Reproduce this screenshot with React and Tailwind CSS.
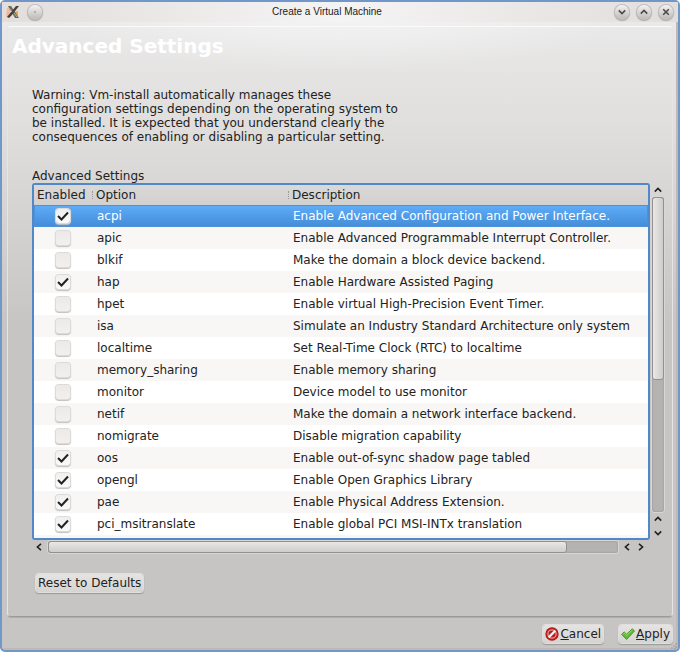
import React, { useState } from 'react';

const OPTIONS = [
  { name: 'acpi', enabled: true, description: 'Enable Advanced Configuration and Power Interface.' },
  { name: 'apic', enabled: false, description: 'Enable Advanced Programmable Interrupt Controller.' },
  { name: 'blkif', enabled: false, description: 'Make the domain a block device backend.' },
  { name: 'hap', enabled: true, description: 'Enable Hardware Assisted Paging' },
  { name: 'hpet', enabled: false, description: 'Enable virtual High-Precision Event Timer.' },
  { name: 'isa', enabled: false, description: 'Simulate an Industry Standard Architecture only system' },
  { name: 'localtime', enabled: false, description: 'Set Real-Time Clock (RTC) to localtime' },
  { name: 'memory_sharing', enabled: false, description: 'Enable memory sharing' },
  { name: 'monitor', enabled: false, description: 'Device model to use monitor' },
  { name: 'netif', enabled: false, description: 'Make the domain a network interface backend.' },
  { name: 'nomigrate', enabled: false, description: 'Disable migration capability' },
  { name: 'oos', enabled: true, description: 'Enable out-of-sync shadow page tabled' },
  { name: 'opengl', enabled: true, description: 'Enable Open Graphics Library' },
  { name: 'pae', enabled: true, description: 'Enable Physical Address Extension.' },
  { name: 'pci_msitranslate', enabled: true, description: 'Enable global PCI MSI-INTx translation' }
];

const GLYPHS = {
  up: 'M1 7 L5 3 L9 7',
  down: 'M1 3 L5 7 L9 3',
  left: 'M7.5 1 L3 5 L7.5 9',
  right: 'M2.5 1 L7 5 L2.5 9',
  close: 'M1.5 1.5 L8.5 8.5 M8.5 1.5 L1.5 8.5'
};

const Glyph = ({ kind, className }) => (
  <svg viewBox="0 0 10 10" className={className} fill="none" stroke="currentColor" strokeWidth="2" aria-hidden="true">
    <path d={GLYPHS[kind]} />
  </svg>
);

const RoundButton = ({ label, kind }) => (
  <button
    type="button"
    aria-label={label}
    className="flex size-[14px] items-center justify-center rounded-full bg-linear-to-b from-[#f4f3f2] to-[#bebcbb] text-[#4a4a4a] shadow-[0_0_0_1px_#c2c0bf,0_1px_1px_1px_#aaa8a7]"
  >
    {kind ? <Glyph kind={kind} className="size-2" /> : <span className="size-[2px] rounded-full bg-[#a3a1a0]" />}
  </button>
);

const ArrowButton = ({ label, kind }) => (
  <button type="button" aria-label={label} className="flex size-[14px] shrink-0 items-center justify-center text-[#222]">
    <Glyph kind={kind} className="size-2" />
  </button>
);

const AppLogo = () => (
  <svg viewBox="0 0 16 16" className="size-4" aria-hidden="true">
    <path d="M2 4 L5 3 L5 9 L3 13 L1 13 Z" fill="#f3b79b" />
    <path d="M10 8 L13 7 L13 12 L10 11 Z" fill="#f2a42f" />
    <path d="M3 2 L6 2 L14 14 L10 14 Z" fill="#6e685c" />
    <path d="M11 2 L14 2 L7 11 L4 14 L2 13 Z" fill="#45413a" />
    <path d="M4 4 L7 8 M9 9 L12 13" stroke="#b5af9f" strokeWidth="1" />
  </svg>
);

const TitleBar = () => (
  <header className="flex h-5 items-center justify-between bg-[linear-gradient(90deg,#e1dedc,#f5f4f4_50%,#e1dedc)] pr-[5px] pl-[3px]">
    <div className="flex w-10 items-center gap-[7px]">
      <AppLogo />
      <RoundButton label="Window menu" />
    </div>
    <div className="font-['Liberation_Sans',sans-serif] text-[10px] leading-[14px] text-[#222]">Create a Virtual Machine</div>
    <div className="flex w-16 justify-end gap-2">
      <RoundButton label="Minimize" kind="down" />
      <RoundButton label="Maximize" kind="up" />
      <RoundButton label="Close" kind="close" />
    </div>
  </header>
);

const CheckBox = ({ label, checked, onChange }) => (
  <label className="relative mx-auto block size-[14px]">
    <input
      type="checkbox"
      aria-label={label}
      checked={checked}
      onChange={onChange}
      className="peer block size-[14px] appearance-none rounded-[3px] bg-linear-to-b from-[#ebeae9] to-[#f1f0ef] shadow-[0_0_0_1px_#dddbda,0_1px_1px_1px_#c2c0bf] checked:from-[#f0efef] checked:to-[#fafafa]"
    />
    <svg viewBox="0 0 14 14" className="pointer-events-none absolute inset-0 hidden peer-checked:block" fill="none" stroke="#222" strokeWidth="2" aria-hidden="true">
      <path d="M2 7 L5.5 10.5 L12 3.5" />
    </svg>
  </label>
);

const HeaderCell = ({ children, divided }) => (
  <th scope="col" className="h-5 p-0 text-left font-normal">
    <div className={`flex items-center ${divided ? '' : 'pl-[3px]'}`}>
      {divided && <span className="mr-[3px] h-[8px] border-l border-dotted border-[#999]" />}
      {children}
    </div>
  </th>
);

const OptionsTable = ({ options, selected, onSelect, onToggle }) => (
  <div className="h-[357px] min-w-0 flex-1 overflow-hidden rounded-[3px] border-2 border-[#5088c8] bg-white">
    <table className="w-full table-fixed border-collapse" aria-labelledby="options-title">
      <colgroup>
        <col className="w-[58px]" />
        <col className="w-[196px]" />
        <col />
      </colgroup>
      <thead className="bg-linear-to-b from-[#dad9d8] to-[#d2d1d0]">
        <tr className="h-5">
          <HeaderCell>Enabled</HeaderCell>
          <HeaderCell divided>Option</HeaderCell>
          <HeaderCell divided>Description</HeaderCell>
        </tr>
      </thead>
      <tbody>
        {options.map((option, idx) => (
          <tr
            key={option.name}
            onClick={() => onSelect(idx)}
            className={`h-[22px] whitespace-nowrap ${idx === selected
              ? 'bg-linear-to-b from-[#5fadf8] to-[#438cd8] text-white shadow-[inset_0_0_0_1px_#4c91d9]'
              : 'odd:bg-white even:bg-[#f8f7f6]'}`}
          >
            <td className="p-0">
              <CheckBox label={option.name} checked={option.enabled} onChange={() => onToggle(idx)} />
            </td>
            <td className="py-0 pl-[5px]">{option.name}</td>
            <td className="py-0 pl-[5px]">{option.description}</td>
          </tr>
        ))}
        <tr className="h-[22px] bg-[#f8f7f6]">
          <td colSpan={3} />
        </tr>
      </tbody>
    </table>
  </div>
);

const VerticalScroll = () => (
  <div className="flex w-[14px] flex-col items-center">
    <ArrowButton label="Scroll up" kind="up" />
    <div className="w-3 flex-1 rounded-[3px] bg-[#b5b3b2] shadow-[0_0_0_1px_#d9d7d6,inset_0_0_2px_#8a8887]">
      <div className="h-[58%] rounded-[3px] border border-[#929090] bg-linear-to-r from-[#e9e8e7] to-[#cfcdcc]" />
    </div>
    <ArrowButton label="Page up" kind="up" />
    <ArrowButton label="Scroll down" kind="down" />
  </div>
);

const HorizontalScroll = () => (
  <div className="mr-[17px] flex h-[14px] items-center">
    <ArrowButton label="Scroll left" kind="left" />
    <div className="mx-[2px] h-3 flex-1 rounded-[3px] bg-[#b5b3b2] shadow-[0_0_0_1px_#d9d7d6,inset_0_0_2px_#8a8887]">
      <div className="h-full w-[91%] rounded-[3px] border border-[#929090] bg-linear-to-b from-[#e9e8e7] to-[#cfcdcc]" />
    </div>
    <ArrowButton label="Page left" kind="left" />
    <ArrowButton label="Scroll right" kind="right" />
  </div>
);

const PushButton = ({ children, onClick }) => (
  <button
    type="button"
    onClick={onClick}
    className="flex h-[18px] items-center gap-px rounded-[3px] bg-linear-to-b from-[#e5e4e3] to-[#d6d4d3] px-[2px] leading-[14px] shadow-[0_0_0_1px_#e0dfde,0_1px_1px_1px_#9a9897]"
  >
    {children}
  </button>
);

const CancelIcon = () => (
  <svg viewBox="0 0 16 16" className="size-[14px]" aria-hidden="true">
    <circle cx="8" cy="8" r="7.6" fill="#b01515" />
    <circle cx="8" cy="8" r="6.4" fill="#cf2a26" />
    <circle cx="8" cy="8" r="4.6" fill="#b51a18" stroke="#dfb9b7" strokeWidth="1.1" />
    <path d="M4.2 11.8 L11.8 4.2" stroke="#f3ecec" strokeWidth="2.6" />
  </svg>
);

const ApplyIcon = () => (
  <svg viewBox="0 0 16 16" className="size-[14px]" aria-hidden="true">
    <path d="M0.8 8.6 L3.6 5.6 L6.4 8.2 L13 2 L15.4 4.6 L6.4 14.2 Z" fill="#62bb36" stroke="#3f8c20" strokeWidth="1" strokeLinejoin="round" />
    <path d="M2.5 8.2 L3.8 7 L6.5 9.6 L13 3.4" stroke="#9fe06e" strokeWidth="1" fill="none" />
  </svg>
);

const ResizeGrip = () => (
  <svg viewBox="0 0 8 8" className="absolute right-0 bottom-0 size-2 text-[#8f8988]" fill="currentColor" aria-hidden="true">
    <circle cx="6" cy="2" r="0.7" />
    <circle cx="4" cy="4" r="0.7" />
    <circle cx="6" cy="5" r="0.7" />
    <circle cx="2" cy="6" r="0.7" />
    <circle cx="5" cy="7" r="0.7" />
  </svg>
);

export default function App() {
  const [options, setOptions] = useState(OPTIONS);
  const [selected, setSelected] = useState(0);

  const toggleOption = (idx) => {
    setOptions(options.map((option, i) => (i === idx ? { ...option, enabled: !option.enabled } : option)));
  };

  return (
    <div className="relative flex min-h-screen flex-col rounded-[5px] border-2 border-[#7196c9] bg-[#c7c5c4] bg-[radial-gradient(300px_70px_at_50%_0,#f6f6f6,transparent),linear-gradient(180deg,#ecebeb,#dfdedd_20%,#c7c5c4_50%)] font-['DejaVu_Sans',sans-serif] text-[12px] leading-[14px] text-[#222] shadow-[inset_-2px_-2px_0_#c0b8b5]">
      <TitleBar />

      <main className="mx-[5px] mt-1 flex-1 rounded-[4px] border border-t-[#fafafa] border-r-[#e6e5e4] border-b-[#9c9a99] border-l-[#e6e5e4] pr-[7px] pl-6 shadow-[0_1px_0_#b0aead]">
        <h1 className="-ml-5 pt-2 text-[20px] leading-[22px] font-bold text-white">Advanced Settings</h1>

        <p className="mt-[31px] max-w-[370px]">
          Warning: Vm-install automatically manages these configuration settings depending on the operating system to
          be installed. It is expected that you understand clearly the consequences of enabling or disabling a
          particular setting.
        </p>

        <h2 id="options-title" className="mt-[25px]">Advanced Settings</h2>
        <div className="flex gap-px">
          <OptionsTable options={options} selected={selected} onSelect={setSelected} onToggle={toggleOption} />
          <VerticalScroll />
        </div>
        <HorizontalScroll />

        <div className="mt-5 flex pl-1">
          <PushButton onClick={() => setOptions(OPTIONS)}>Reset to Defaults</PushButton>
        </div>
      </main>

      <footer className="flex justify-end gap-4 px-[6px] pt-2 pb-[7px]">
        <PushButton>
          <CancelIcon />
          <span><u>C</u>ancel</span>
        </PushButton>
        <PushButton>
          <ApplyIcon />
          <span><u>A</u>pply</span>
        </PushButton>
      </footer>
      <ResizeGrip />
    </div>
  );
}
